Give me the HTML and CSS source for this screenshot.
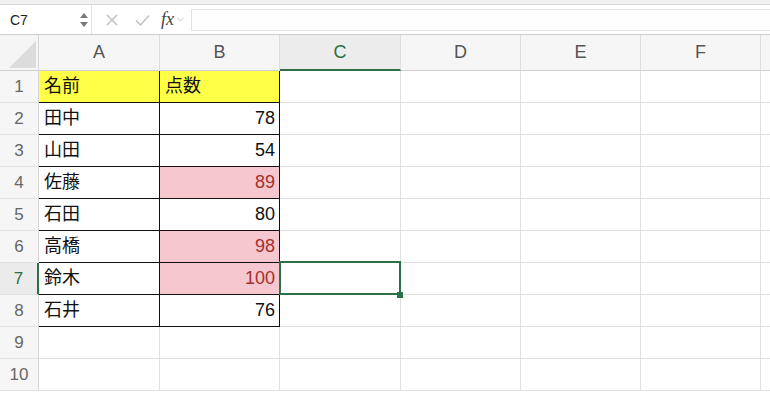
FILE: index.html
```html
<!DOCTYPE html>
<html lang="ja">
<head>
<meta charset="utf-8">
<title>Sheet</title>
<link rel="stylesheet" href="styles.css">
</head>
<body>
<div class="top-strip"></div>
<div class="formula-bar">
  <div class="name-box">
    <span class="name">C7</span>
    <svg class="spinner" width="10" height="16" viewBox="0 0 10 16"><path d="M1 6 L5 1 L9 6 Z" fill="#7a7a7a"/><path d="M1 10 L5 15 L9 10 Z" fill="#7a7a7a"/></svg>
  </div>
  <div class="fx-tools">
    <svg class="icon-x" width="12" height="12" viewBox="0 0 12 12"><path d="M1 1 L11 11 M11 1 L1 11" stroke="#c4c4c4" stroke-width="1.6" fill="none"/></svg>
    <svg class="icon-check" width="15" height="12" viewBox="0 0 15 12"><path d="M1 6.5 L5.5 11 L14 1.5" stroke="#c4c4c4" stroke-width="1.6" fill="none"/></svg>
    <span class="fx">fx</span>
    <svg class="icon-chev" width="7" height="5" viewBox="0 0 7 5"><path d="M0.5 0.8 L3.5 4 L6.5 0.8" stroke="#c8c8c8" stroke-width="1" fill="none"/></svg>
  </div>
  <div class="formula-input"></div>
</div>
<div class="sheet">
  <div class="grid">
    <div class="corner"><svg width="27" height="27" viewBox="0 0 27 27"><path d="M27 0 L27 27 L0 27 Z" fill="#dcdcdc"/></svg></div>
    <div class="ch">A</div><div class="ch">B</div><div class="ch ch-active">C</div><div class="ch">D</div><div class="ch">E</div><div class="ch">F</div><div class="ch"></div>

    <div class="rh">1</div><div class="c t y">名前</div><div class="c t y">点数</div><div class="c"></div><div class="c"></div><div class="c"></div><div class="c"></div><div class="c"></div>
    <div class="rh">2</div><div class="c t">田中</div><div class="c t num">78</div><div class="c"></div><div class="c"></div><div class="c"></div><div class="c"></div><div class="c"></div>
    <div class="rh">3</div><div class="c t">山田</div><div class="c t num">54</div><div class="c"></div><div class="c"></div><div class="c"></div><div class="c"></div><div class="c"></div>
    <div class="rh">4</div><div class="c t">佐藤</div><div class="c t num p">89</div><div class="c"></div><div class="c"></div><div class="c"></div><div class="c"></div><div class="c"></div>
    <div class="rh">5</div><div class="c t">石田</div><div class="c t num">80</div><div class="c"></div><div class="c"></div><div class="c"></div><div class="c"></div><div class="c"></div>
    <div class="rh">6</div><div class="c t">高橋</div><div class="c t num p">98</div><div class="c"></div><div class="c"></div><div class="c"></div><div class="c"></div><div class="c"></div>
    <div class="rh rh-active">7</div><div class="c t">鈴木</div><div class="c t num p">100</div><div class="c"></div><div class="c"></div><div class="c"></div><div class="c"></div><div class="c"></div>
    <div class="rh">8</div><div class="c t">石井</div><div class="c t num">76</div><div class="c"></div><div class="c"></div><div class="c"></div><div class="c"></div><div class="c"></div>
    <div class="rh">9</div><div class="c"></div><div class="c"></div><div class="c"></div><div class="c"></div><div class="c"></div><div class="c"></div><div class="c"></div>
    <div class="rh">10</div><div class="c"></div><div class="c"></div><div class="c"></div><div class="c"></div><div class="c"></div><div class="c"></div><div class="c"></div>
  </div>
  <div class="selection"><span class="handle"></span></div>
</div>
</body>
</html>
```

FILE: styles.css
```css
html, body {
  margin: 0;
  padding: 0;
  background: #ffffff;
  overflow: hidden;
}
body {
  width: 770px;
  height: 394px;
  font-family: "Liberation Sans", "Noto Sans CJK JP", sans-serif;
}
.top-strip {
  height: 4px;
  background: #f1f1f1;
}
.formula-bar {
  height: 31px;
  box-sizing: border-box;
  border-top: 1px solid #d9d9d9;
  border-bottom: 1px solid #cdcdcd;
  display: flex;
  align-items: stretch;
  background: #ffffff;
}
.name-box {
  width: 92px;
  box-sizing: border-box;
  border-right: 1px solid #e4e4e4;
  display: flex;
  align-items: center;
  justify-content: space-between;
  padding: 0 2px 0 10px;
}
.name {
  font-size: 14px;
  color: #222;
}
.spinner {
  display: block;
}
.fx-tools {
  display: flex;
  align-items: center;
  padding-left: 14px;
}
.icon-x { display: block; margin-right: 17px; }
.icon-check { display: block; margin-right: 11px; }
.fx {
  font-family: "Liberation Serif", serif;
  font-style: italic;
  font-size: 18px;
  color: #444;
  margin-right: 3px;
  line-height: 1;
  position: relative;
  top: -1px;
}
.icon-chev { display: block; margin-right: 7px; }
.formula-input {
  flex: 1;
  margin: 4px 0 3px 0;
  border: 1px solid #e3e3e3;
  border-right: none;
  background: #fefefe;
}
.sheet {
  position: relative;
  height: 359px;
}
.grid {
  display: grid;
  grid-template-columns: 39px 121px 120px 121px 120px 120px 120px 1fr;
  grid-template-rows: 36px repeat(10, 32px) 3px;
  grid-auto-rows: 3px;
}
.grid > div {
  box-sizing: border-box;
  border-right: 1px solid #e1e1e1;
  border-bottom: 1px solid #e1e1e1;
  font-size: 18px;
  line-height: 31px;
  white-space: nowrap;
  overflow: hidden;
}
.corner {
  background: #f5f5f5;
  display: flex;
  align-items: flex-end;
  justify-content: flex-end;
  padding: 0 2px 2px 0;
}
.corner svg { display: block; }
.grid > .corner {
  border-right-color: #d6d6d6;
  border-bottom-color: #cfcfcf;
}
.grid > .ch {
  background: #f6f6f6;
  color: #555;
  text-align: center;
  font-size: 18px;
  line-height: 35px;
  border-right-color: #dedede;
  border-bottom-color: #cfcfcf;
}
.grid > .ch-active {
  background: #ececec;
  color: #2b6e42;
  border-bottom: 2px solid #2e7046;
  line-height: 34px;
}
.grid > .rh {
  background: #f6f6f6;
  color: #666;
  text-align: center;
  font-size: 17px;
  border-right-color: #d6d6d6;
  border-bottom-color: #e1e1e1;
}
.grid > .rh-active {
  background: #ebebeb;
  color: #2b6e42;
  border-right: 2px solid #2e7046;
}
.grid > .c {
  padding: 0 4px 0 5px;
  color: #111;
}
.grid > .t {
  border-right-color: #111;
  border-bottom-color: #111;
}
.y { background: #ffff47; }
.p { background: #f6c7ce; }
.grid > .p { color: #a3302f; }
.num { text-align: right; }
.selection {
  position: absolute;
  left: 279px;
  top: 226px;
  width: 122px;
  height: 34px;
  box-sizing: border-box;
  border: 2px solid #2e7046;
}
.handle {
  position: absolute;
  left: 116px;
  top: 29px;
  width: 6px;
  height: 6px;
  background: #2e7046;
}
```
